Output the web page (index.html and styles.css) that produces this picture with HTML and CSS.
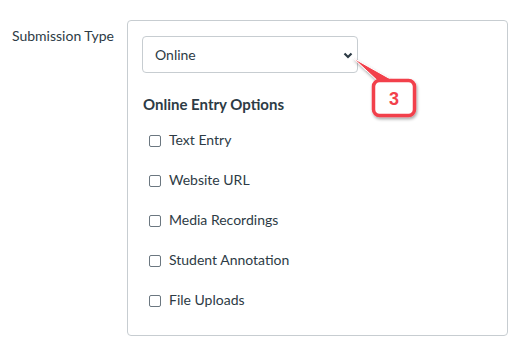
FILE: index.html
```html
<!DOCTYPE html>
<html lang="en">
<head>
    <meta charset="UTF-8">
    <title>Submission Type</title>
    <link rel="stylesheet" href="styles.css">
</head>
<body>
    <div class="form-row">
        <div class="row-label">Submission Type</div>
        <div class="panel">
            <div class="select-box">
                <span>Online</span>
                <svg class="chevron" width="10" height="7" viewBox="0 0 10 7">
                    <path d="M1.5 1.5 L5 5 L8.5 1.5" fill="none" stroke="#2d3b45" stroke-width="2.2"/>
                </svg>
            </div>
            <div class="options-title">Online Entry Options</div>
            <div class="options">
                <label class="option"><span class="check"></span>Text Entry</label>
                <label class="option"><span class="check"></span>Website URL</label>
                <label class="option"><span class="check"></span>Media Recordings</label>
                <label class="option"><span class="check"></span>Student Annotation</label>
                <label class="option"><span class="check"></span>File Uploads</label>
            </div>
        </div>
    </div>

    <!-- step callout -->
    <svg class="callout" width="531" height="347" viewBox="0 0 531 347">
        <defs>
            <filter id="shadow" x="-20%" y="-20%" width="150%" height="150%">
                <feDropShadow dx="1" dy="2" stdDeviation="1.5" flood-color="#000" flood-opacity="0.35"/>
            </filter>
        </defs>
        <g filter="url(#shadow)">
            <polygon points="353,58 380,83 394,81" fill="#f2414b" stroke="#fff" stroke-width="1" stroke-linejoin="round"/>
            <rect x="373.5" y="80.5" width="41" height="35" rx="6" fill="#fff" stroke="#f2414b" stroke-width="3.5"/>
        </g>
        <text x="394" y="105" text-anchor="middle" class="callout-num">3</text>
    </svg>
</body>
</html>
```

FILE: styles.css
```css
* {
    margin: 0;
    padding: 0;
    box-sizing: border-box;
}

body {
    background-color: #fff;
    font-family: Lato, "Open Sans", sans-serif;
    font-size: 14px;
    color: #2d3b45;
    position: relative;
}

.form-row {
    display: flex;
    align-items: flex-start;
    padding-top: 20px;
}

.row-label {
    width: 127px;
    padding-left: 12px;
    padding-top: 7px;
    line-height: 18px;
}

.panel {
    width: 381px;
    height: 316px;
    border: 1px solid #c7cdd1;
    border-radius: 4px;
    padding: 15px 14px 0 14px;
}

.select-box {
    width: 216px;
    height: 37px;
    border: 1px solid #c7cdd1;
    border-radius: 4px;
    display: flex;
    align-items: center;
    justify-content: space-between;
    padding: 0 4px 0 12px;
}

.chevron {
    margin-top: 1px;
}

.options-title {
    font-weight: bold;
    font-size: 15px;
    line-height: 20px;
    margin-top: 21px;
    padding-left: 1px;
}

.options {
    display: flex;
    flex-direction: column;
    margin-top: 6px;
    padding-left: 7px;
}

.option {
    height: 40px;
    display: flex;
    align-items: center;
    line-height: 18px;
}

.check {
    width: 12px;
    height: 12px;
    border: 1px solid #6b7780;
    border-radius: 2px;
    margin-right: 8px;
    margin-top: 1px;
}

.callout {
    position: absolute;
    top: 0;
    left: 0;
    pointer-events: none;
}

.callout-num {
    font-family: "Liberation Sans", Arial, sans-serif;
    font-weight: bold;
    font-size: 18px;
    fill: #f2414b;
}
```
